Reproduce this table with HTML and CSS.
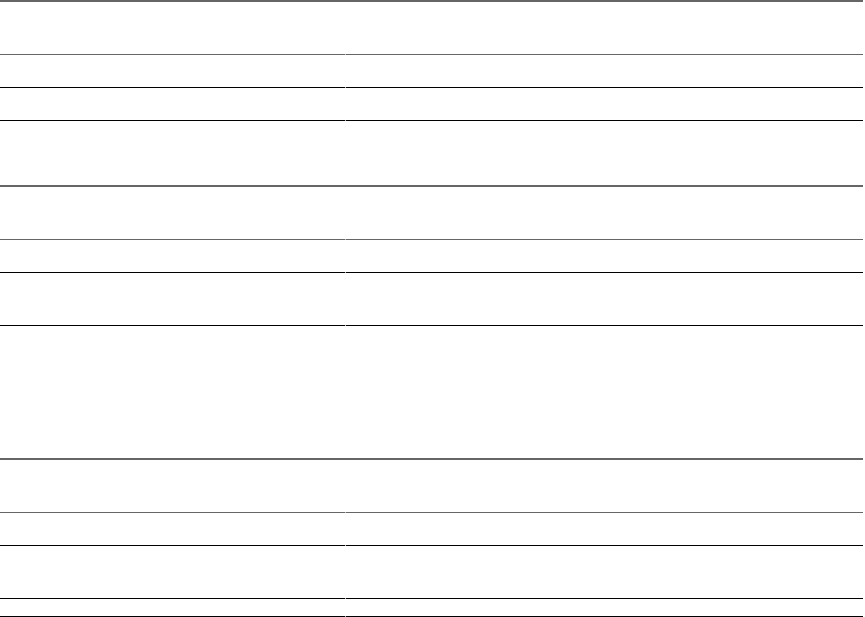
FILE: index.html
```html
<!DOCTYPE html>
<html>
<head>
<meta charset="utf-8">
<link rel="stylesheet" href="styles.css">
</head>
<body>
<div class="sheet">
  <section class="group">
    <div class="row head h52"><div class="cell key"></div><div class="cell val"></div></div>
    <div class="row h32"><div class="cell key"></div><div class="cell val"></div></div>
    <div class="row h32"><div class="cell key"></div><div class="cell val"></div></div>
    <div class="row last h64"><div class="cell key"></div><div class="cell val"></div></div>
  </section>
  <section class="group">
    <div class="row head h52"><div class="cell key"></div><div class="cell val"></div></div>
    <div class="row h32"><div class="cell key"></div><div class="cell val"></div></div>
    <div class="row h52"><div class="cell key"></div><div class="cell val"></div></div>
    <div class="row last h132"><div class="cell key"></div><div class="cell val"></div></div>
  </section>
  <section class="group final">
    <div class="row head h52"><div class="cell key"></div><div class="cell val"></div></div>
    <div class="row h32"><div class="cell key"></div><div class="cell val"></div></div>
    <div class="row h52"><div class="cell key"></div><div class="cell val"></div></div>
    <div class="row h17"><div class="cell key"></div><div class="cell val"></div></div>
  </section>
</div>
</body>
</html>
```
FILE: styles.css
```css
html, body {
  margin: 0;
  padding: 0;
  background: #fff;
  font-family: "Liberation Sans", Arial, sans-serif;
}
.sheet {
  width: 863px;
  display: flex;
  flex-direction: column;
}
.group {
  border-top: 2px solid #666;
  display: flex;
  flex-direction: column;
}
.row {
  display: flex;
  gap: 1px;
  background: linear-gradient(#b5b5b5, #b5b5b5) no-repeat left bottom / 100% 1px;
}
.row.last {
  background: none;
}
.cell {
  border-bottom: 1px solid #000;
  box-sizing: content-box;
}
.key { width: 345px; }
.val { flex: 1; }
.row.head .cell { border-bottom-color: #666; }
.row.last .cell { border-bottom: none; }
.h17 .cell { height: 17px; }
.h32 .cell { height: 32px; }
.h52 .cell { height: 52px; }
.h64 .cell { height: 64px; }
.h132 .cell { height: 132px; }
```
